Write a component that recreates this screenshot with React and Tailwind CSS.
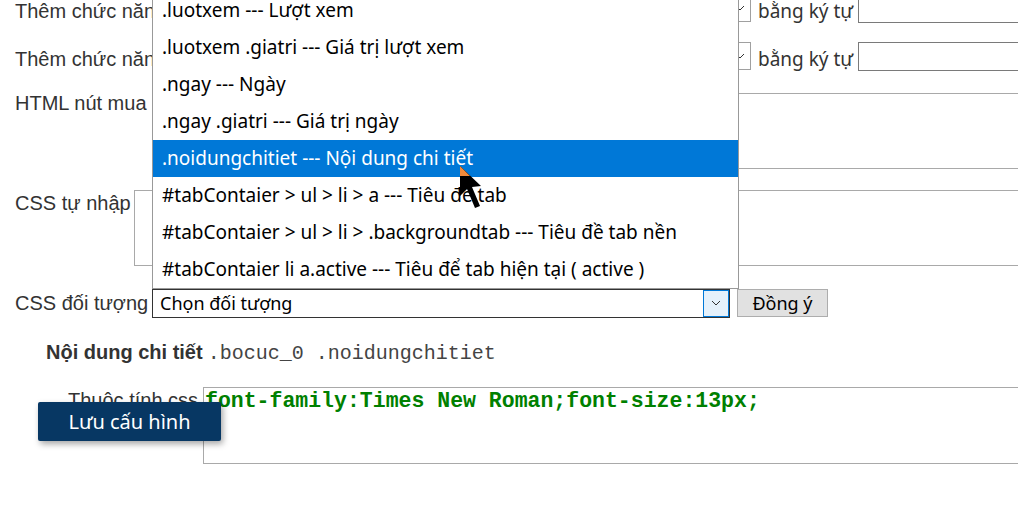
const options = [
  ".luotxem --- Lượt xem",
  ".luotxem .giatri --- Giá trị lượt xem",
  ".ngay --- Ngày",
  ".ngay .giatri --- Giá trị ngày",
  ".noidungchitiet --- Nội dung chi tiết",
  "#tabContaier > ul > li > a --- Tiêu đề tab",
  "#tabContaier > ul > li > .backgroundtab --- Tiêu đề tab nền",
  "#tabContaier li a.active --- Tiêu để tab hiện tại ( active )",
];

const Chevron = () => (
  <svg width="10" height="6" viewBox="0 0 10 6" className="shrink-0">
    <path d="M1 1l4 4 4-4" fill="none" stroke="#333" strokeWidth="1" />
  </svg>
);

const ReplaceRow = ({ label }) => (
  <div className="flex h-[28px] items-center">
    <span className="w-[185px] shrink-0 overflow-hidden whitespace-nowrap pl-[15px] pt-[6px]">
      {label}
    </span>
    <div className="flex h-[28px] w-[566px] shrink-0 items-center justify-end border border-[#a0a0a0] bg-white pr-[5px]">
      <Chevron />
    </div>
    <span className="w-[107px] shrink-0 whitespace-nowrap pl-[7px] pt-[6px] font-['Noto_Sans'] text-[19px]">
      bằng ký tự
    </span>
    <div className="h-[29px] w-[200px] shrink-0 border border-[#7a7a7a] bg-white"></div>
  </div>
);

const App = () => {
  return (
    <div className="relative h-[525px] w-[1018px] overflow-hidden bg-white font-['Liberation_Sans'] text-[20px] text-[#333]">
      {/* form rows */}
      <div className="mt-[-6px] w-[1100px]">
        <ReplaceRow label="Thêm chức năng thay thế" />
        <div className="mt-[20px]">
          <ReplaceRow label="Thêm chức năng thay thế" />
        </div>

        <div className="mt-[23px] flex items-start">
          <span className="w-[175px] shrink-0 overflow-hidden whitespace-nowrap pl-[15px] leading-[20px]">
            HTML nút mua hàng
          </span>
          <div className="h-[76px] w-[900px] shrink-0 border border-[#a9a9a9]"></div>
        </div>

        <div className="mt-[21px] flex items-start">
          <span className="w-[134px] shrink-0 whitespace-nowrap pl-[15px] pt-[1px] leading-[24px]">
            CSS tự nhập
          </span>
          <div className="h-[76px] w-[950px] shrink-0 border border-[#a9a9a9]"></div>
        </div>

        <div className="mt-[22px] flex items-center">
          <span className="w-[152px] shrink-0 whitespace-nowrap pl-[15px]">
            CSS đối tượng
          </span>
          <div className="flex h-[29px] w-[578px] shrink-0 items-stretch border border-[#333] bg-white">
            <span className="flex-1 pl-[7px] font-['Noto_Sans'] text-[18px] leading-[27px] text-black">
              Chọn đối tượng
            </span>
            <div className="flex w-[26px] items-center justify-center border border-[#0078d7] bg-[#e5f1fb]">
              <Chevron />
            </div>
          </div>
          <button className="ml-[7px] h-[28px] w-[91px] border border-[#adadad] bg-[#e1e1e1] font-['Noto_Sans'] text-[18px] leading-[24px] text-black">
            Đồng ý
          </button>
        </div>

        <div className="mt-[22px] flex items-baseline pl-[46px] leading-[24px]">
          <span className="font-bold">Nội dung chi tiết</span>
          <span className="ml-[5px] font-['Liberation_Mono'] text-[#444]">
            .bocuc_0 .noidungchitiet
          </span>
        </div>

        <div className="mt-[21px] flex items-start">
          <span className="w-[203px] shrink-0 whitespace-nowrap pl-[68px] pt-[2px] leading-[22px]">
            Thuộc tính css
          </span>
          <div className="h-[77px] w-[900px] shrink-0 border border-[#a9a9a9] pl-[1px] pt-[4px] leading-[16px]">
            <span className="font-['Liberation_Mono'] text-[21.5px] font-bold leading-[16px] text-[#008000]">
              font-family:Times New Roman;font-size:13px;
            </span>
          </div>
        </div>
      </div>

      {/* open select list */}
      <div className="absolute left-[152px] top-[-9px] w-[587px] border border-[#999] bg-white font-['Noto_Sans'] text-[19px] text-black">
        {options.map((o, i) => (
          <div
            key={i}
            className={
              i === 4
                ? "h-[37px] whitespace-nowrap bg-[#0078d7] pl-[9px] leading-[37px] text-white"
                : "h-[37px] whitespace-nowrap pl-[9px] leading-[37px]"
            }
          >
            {o}
          </div>
        ))}
      </div>

      {/* floating save button */}
      <button className="absolute left-[38px] top-[402px] h-[39px] w-[183px] rounded-[2px] bg-[#073763] font-['Noto_Sans'] text-[20px] text-white shadow-[2px_3px_6px_rgba(0,0,0,0.35)]">
        Lưu cấu hình
      </button>

      {/* mouse cursor */}
      <svg
        className="absolute left-[460px] top-[166px]"
        width="24"
        height="46"
        viewBox="0 0 24 46"
      >
        <polygon
          points="0,0 0,30 7,23 15,42 20,40 12,21 21,20"
          fill="#000"
        />
        <polygon points="0,0 0,10 10,10" fill="#f08a3c" />
      </svg>
    </div>
  );
};

export default App;
